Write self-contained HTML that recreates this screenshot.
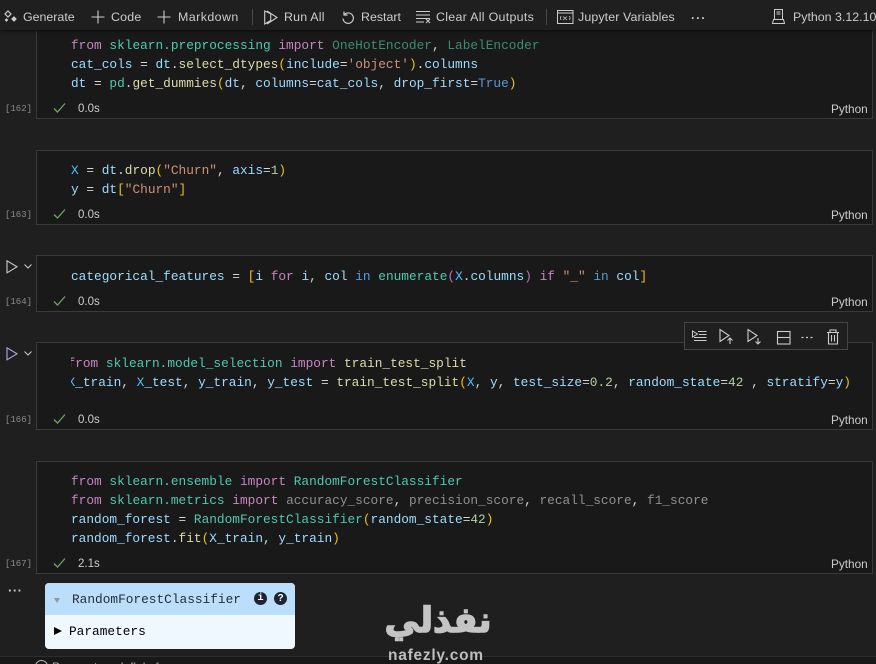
<!DOCTYPE html>
<html><head><meta charset="utf-8">
<style>
html,body{margin:0;padding:0;background:#1f1f1f;}
#p{position:relative;width:876px;height:664px;overflow:hidden;background:#1f1f1f;font-family:"Liberation Sans",sans-serif;filter:blur(.3px);}
.cell{position:absolute;left:36px;width:837px;background:#191919;border:1px solid #3a3a3a;box-sizing:border-box;}
.l{position:absolute;left:71px;font:12.8px/19px "Liberation Mono",monospace;color:#d4d4d4;white-space:pre;height:19px;}
.k{color:#c586c0}.m{color:#4ec9b0}.mu{color:#3f8a76}.v{color:#9cdcfe}.f{color:#dcdcaa}.s{color:#ce9178}.n{color:#b5cea8}.b{color:#e8c020}.p{color:#c86cc0}.c{color:#569cd6}.o{color:#d4d4d4}.g{color:#8f8f8f}.t{color:#4fc1ff}
.id{position:absolute;left:5px;font:9px/12px "Liberation Mono",monospace;color:#8c8c8c;margin-top:1px;}
.tm{position:absolute;left:78px;font:11.5px/14px "Liberation Sans",sans-serif;color:#cccccc;}
.py{position:absolute;left:831px;font:11.8px/14px "Liberation Sans",sans-serif;color:#cccccc;}
.tb{position:absolute;top:10px;font:12.4px/15px "Liberation Sans",sans-serif;color:#cccccc;white-space:pre;}
svg{position:absolute;overflow:visible;}
</style></head><body><div id="p">

<!-- cells -->
<div class="cell" style="top:20px;height:99px;border-top:none;"></div>
<div class="cell" style="top:150px;height:75px;"></div>
<div class="cell" style="top:255px;height:57px;"></div>
<div class="cell" style="top:342px;height:88px;"></div>
<div class="cell" style="top:461px;height:113px;"></div>

<!-- toolbar -->
<div style="position:absolute;left:0;top:0;width:876px;height:30px;background:#1f1f1f;box-shadow:0 1px 3px #0d0d0d;"></div>
<svg style="left:3px;top:10px" width="16" height="16" fill="none" stroke="#ccc" stroke-width="1.2"><path d="M5 1l3 3-3 3-3-3z"/><path d="M11 7l2 2-2 2-2-2zM3.500 9l1 1-1 1-1-1z" fill="#ccc"/></svg>
<div class="tb" style="left:23px">Generate</div>
<svg style="left:91px;top:10px" width="14" height="14" stroke="#ccc" stroke-width="1.100" fill="none"><path d="M7 .5v13M.5 7h13"/></svg>
<div class="tb" style="left:111px;letter-spacing:.2px">Code</div>
<svg style="left:157px;top:10px" width="14" height="14" stroke="#ccc" stroke-width="1.100" fill="none"><path d="M7 .5v13M.5 7h13"/></svg>
<div class="tb" style="left:178px;letter-spacing:.45px">Markdown</div>
<div style="position:absolute;left:252px;top:9px;width:1px;height:16px;background:#4a4a4a"></div>
<svg style="left:264px;top:10px" width="16" height="15" stroke="#ccc" stroke-width="1.100" fill="none"><path d="M.7 1v13l6-3.500V3.800zM3 1l10 6.500L3 14"/></svg>
<div class="tb" style="left:284px;letter-spacing:.2px">Run All</div>
<svg style="left:341px;top:10px" width="14" height="14" stroke="#ccc" stroke-width="1.200" fill="none"><path d="M3 1.500v3.500h3.500M3.200 4.800A5.200 5.200 0 1 1 2 8.500"/></svg>
<div class="tb" style="left:361px">Restart</div>
<svg style="left:416px;top:11px" width="16" height="12" stroke="#ccc" stroke-width="1" fill="none"><path d="M0 .5h14M0 4h14M0 7.500h14M0 11h8M10 8l4 4M14 8l-4 4"/></svg>
<div class="tb" style="left:436px;letter-spacing:.3px">Clear All Outputs</div>
<div style="position:absolute;left:546px;top:9px;width:1px;height:16px;background:#4a4a4a"></div>
<svg style="left:557px;top:10px" width="17" height="14" stroke="#ccc" stroke-width="1" fill="none"><rect x=".5" y=".5" width="15.500" height="13"/><path d="M.5 3h15.500"/><path d="M4 6q-1 2 0 4M12.500 6q1 2 0 4M6 6.500l4 3.500M10 6.500l-4 3.500" stroke-width=".8"/></svg>
<div class="tb" style="left:578px;letter-spacing:.12px">Jupyter Variables</div>
<div class="tb" style="left:691px;top:11px;letter-spacing:1px;font-weight:bold">···</div>
<svg style="left:771px;top:9px" width="15" height="16" stroke="#ccc" stroke-width="1" fill="none"><path d="M3.500.5h8v10h-8zM2.500 10.500h10l1 4h-12zM5.500 3h4M5.500 5h4"/></svg>
<div class="tb" style="left:793px">Python 3.12.10</div>

<!-- cell 162 -->
<div class="l" style="top:36px"><span class="k">from</span> <span class="m">sklearn.preprocessing</span> <span class="k">import</span> <span class="mu">OneHotEncoder</span>, <span class="mu">LabelEncoder</span></div>
<div class="l" style="top:55px"><span class="v">cat_cols</span> = <span class="v">dt</span>.<span class="f">select_dtypes</span><span class="b">(</span><span class="v">include</span>=<span class="s">'object'</span><span class="b">)</span>.<span class="v">columns</span></div>
<div class="l" style="top:74px"><span class="v">dt</span> = <span class="m">pd</span>.<span class="f">get_dummies</span><span class="b">(</span><span class="v">dt</span>, <span class="v">columns</span>=<span class="v">cat_cols</span>, <span class="v">drop_first</span>=<span class="c">True</span><span class="b">)</span></div>
<div class="id" style="top:102px">[162]</div>
<svg style="left:53px;top:102px" width="13" height="12" fill="none" stroke="#6ca35e" stroke-width="1.300"><path d="M1 6.500l3.500 3.500L12 1.500"/></svg>
<div class="tm" style="top:102px">0.0s</div>
<div class="py" style="top:102px">Python</div>

<!-- cell 163 -->
<div class="l" style="top:161px"><span class="t">X</span> = <span class="v">dt</span>.<span class="f">drop</span><span class="b">(</span><span class="s">"Churn"</span>, <span class="v">axis</span>=<span class="n">1</span><span class="b">)</span></div>
<div class="l" style="top:180px"><span class="v">y</span> = <span class="v">dt</span><span class="b">[</span><span class="s">"Churn"</span><span class="b">]</span></div>
<div class="id" style="top:208px">[163]</div>
<svg style="left:53px;top:208px" width="13" height="12" fill="none" stroke="#6ca35e" stroke-width="1.300"><path d="M1 6.500l3.500 3.500L12 1.500"/></svg>
<div class="tm" style="top:208px">0.0s</div>
<div class="py" style="top:208px">Python</div>

<!-- cell 164 -->
<svg style="left:6px;top:260px" width="32" height="14" fill="none" stroke="#ccc" stroke-width="1.100"><path d="M1 .8v12l10-6z"/><path d="M18.500 4.500l3.500 3.500 3.500-3.500" stroke-width="1"/></svg>
<div class="l" style="top:267px"><span class="v">categorical_features</span> = <span class="b">[</span><span class="v">i</span> <span class="k">for</span> <span class="v">i</span>, <span class="v">col</span> <span class="c">in</span> <span class="m">enumerate</span><span class="p">(</span><span class="t">X</span>.<span class="v">columns</span><span class="p">)</span> <span class="k">if</span> <span class="s">"_"</span> <span class="c">in</span> <span class="v">col</span><span class="b">]</span></div>
<div class="id" style="top:295px">[164]</div>
<svg style="left:53px;top:295px" width="13" height="12" fill="none" stroke="#6ca35e" stroke-width="1.300"><path d="M1 6.500l3.500 3.500L12 1.500"/></svg>
<div class="tm" style="top:295px">0.0s</div>
<div class="py" style="top:295px">Python</div>

<!-- cell 166 -->
<svg style="left:6px;top:347px" width="32" height="14" fill="none" stroke="#b9a6e0" stroke-width="1.100"><path d="M1 .8v12l10-6z"/><path d="M18.500 4.500l3.500 3.500 3.500-3.500" stroke="#ccc" stroke-width="1"/></svg>
<div class="l" style="top:354px;width:800px;overflow:hidden"><div style="margin-left:-3.5px"><span class="k">from</span> <span class="m">sklearn.model_selection</span> <span class="k">import</span> <span class="f">train_test_split</span></div></div>
<div class="l" style="top:373px;width:800px;overflow:hidden"><div style="margin-left:-3.5px"><span class="t">X</span><span class="v">_train</span>, <span class="t">X</span><span class="v">_test</span>, <span class="v">y_train</span>, <span class="v">y_test</span> = <span class="f">train_test_split</span><span class="b">(</span><span class="t">X</span>, <span class="v">y</span>, <span class="v">test_size</span>=<span class="n">0.2</span>, <span class="v">random_state</span>=<span class="n">42</span> , <span class="v">stratify</span>=<span class="v">y</span><span class="b">)</span></div></div>
<div class="id" style="top:413px">[166]</div>
<svg style="left:53px;top:413px" width="13" height="12" fill="none" stroke="#6ca35e" stroke-width="1.300"><path d="M1 6.500l3.500 3.500L12 1.500"/></svg>
<div class="tm" style="top:413px">0.0s</div>
<div class="py" style="top:413px">Python</div>

<!-- cell floating toolbar -->
<div style="position:absolute;left:684px;top:322px;width:164px;height:28px;box-sizing:border-box;background:#1f1f1f;border:1px solid #454545;"></div>
<svg style="left:692px;top:329px" width="150" height="16" fill="none" stroke="#ccc" stroke-width="1.100">
<path d="M.5 2v6l5-3zM6 2.500h8.500M7 5.500h7.500M2 8.500h12.500M2 11.500h12.500" stroke-width="1"/>
<path d="M28 .5v12l9-6zM38 9v6M35.500 11.500l2.500-2.500 2.500 2.500" />
<path d="M56 .5v12l9-6zM66 9v6M63.500 12.500l2.500 2.500 2.500-2.500"/>
<rect x="85.500" y="2.500" width="12.500" height="12.500"/><path d="M85.500 8.500h12.500"/>
<path d="M109.500 8.500h2M114 8.500h2M118.500 8.500h2" stroke-width="1.300"/>
<path d="M135 3.500h12M138 3.500v-2.500h6v2.500M136.500 3.500v11.500h9V3.500M139.500 6v6.500M142.500 6v6.500"/>
</svg>

<!-- cell 167 -->
<div class="l" style="top:472px"><span class="k">from</span> <span class="m">sklearn.ensemble</span> <span class="k">import</span> <span class="m">RandomForestClassifier</span></div>
<div class="l" style="top:491px"><span class="k">from</span> <span class="m">sklearn.metrics</span> <span class="k">import</span> <span class="g">accuracy_score</span>, <span class="g">precision_score</span>, <span class="g">recall_score</span>, <span class="g">f1_score</span></div>
<div class="l" style="top:510px"><span class="v">random_forest</span> = <span class="m">RandomForestClassifier</span><span class="b">(</span><span class="v">random_state</span>=<span class="n">42</span><span class="b">)</span></div>
<div class="l" style="top:529px"><span class="v">random_forest</span>.<span class="f">fit</span><span class="b">(</span><span class="v">X_train</span>, <span class="v">y_train</span><span class="b">)</span></div>
<div class="id" style="top:557px">[167]</div>
<svg style="left:53px;top:557px" width="13" height="12" fill="none" stroke="#6ca35e" stroke-width="1.300"><path d="M1 6.500l3.500 3.500L12 1.500"/></svg>
<div class="tm" style="top:557px">2.1s</div>
<div class="py" style="top:557px">Python</div>

<!-- output -->
<div style="position:absolute;left:8px;top:584px;font:bold 13px/14px 'Liberation Sans',sans-serif;color:#ccc;letter-spacing:.5px">···</div>
<div style="position:absolute;left:45px;top:583px;width:250px;height:66px;border-radius:4px;overflow:hidden;background:#f0f8ff;">
  <div style="position:absolute;left:0;top:0;width:250px;height:32px;background:#bbdefb"></div>
  <div style="position:absolute;left:9px;top:15px;width:0;height:0;border-left:3.500px solid transparent;border-right:3.500px solid transparent;border-top:5px solid #8a9aa8"></div>
  <div style="position:absolute;left:27px;top:7px;font:12.800px/19px 'Liberation Mono',monospace;color:#1f2d3a;white-space:pre">RandomForestClassifier</div>
  <div style="position:absolute;left:209px;top:9px;width:13px;height:13px;border-radius:50%;background:#1f2430;color:#fff;font:bold 10px/13px 'Liberation Mono',monospace;text-align:center">i</div>
  <div style="position:absolute;left:229px;top:9px;width:13px;height:13px;border-radius:50%;background:#1f2430;color:#fff;font:bold 10px/13px 'Liberation Sans',sans-serif;text-align:center">?</div>
  <div style="position:absolute;left:9px;top:44px;width:0;height:0;border-top:4.500px solid transparent;border-bottom:4.500px solid transparent;border-left:8px solid #000"></div>
  <div style="position:absolute;left:24px;top:39px;font:12.800px/19px 'Liberation Mono',monospace;color:#000;white-space:pre">Parameters</div>
</div>

<!-- bottom strip -->
<div style="position:absolute;left:0;top:656px;width:876px;height:8px;background:#181818;border-top:1px solid #2e2e2e;box-sizing:border-box"></div>
<div style="position:absolute;left:35px;top:660px;width:11px;height:11px;border:1px solid #bbb;border-radius:50%"></div>
<div style="position:absolute;left:52px;top:660px;font:12px/14px 'Liberation Sans',sans-serif;color:#aaa;white-space:pre">Parameters  l  fl  k  f</div>

<!-- watermark -->
<div style="position:absolute;left:383px;top:601px;width:110px;text-align:center;font:bold 35px/40px 'Liberation Sans','Noto Sans CJK SC','DejaVu Sans',sans-serif;color:#c4c4c4;-webkit-text-stroke:1.5px #c4c4c4;direction:rtl;white-space:nowrap">نفذلي</div>
<div style="position:absolute;left:388px;top:648px;font:bold 15.5px/16px 'Liberation Sans',sans-serif;color:#bdbdbd;letter-spacing:.75px;white-space:nowrap">nafezly.com</div>

</div></body></html>
